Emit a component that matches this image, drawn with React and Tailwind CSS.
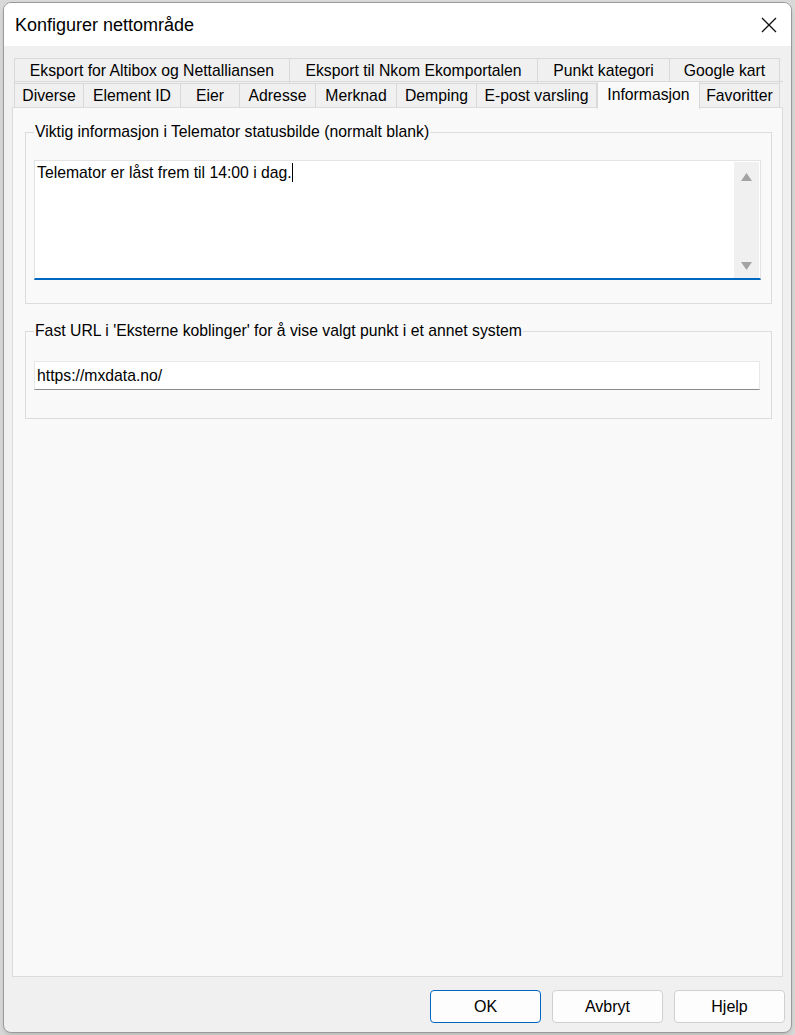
import React from "react";

const topTabs = [
  { label: "Eksport for Altibox og Nettalliansen", w: "w-[276px]" },
  { label: "Eksport til Nkom Ekomportalen", w: "w-[248px]" },
  { label: "Punkt kategori", w: "w-[132px]" },
  { label: "Google kart", w: "w-[110px]" },
];

const bottomTabs = [
  { label: "Diverse", w: "w-[70px]" },
  { label: "Element ID", w: "w-[97px]" },
  { label: "Eier", w: "w-[59px]" },
  { label: "Adresse", w: "w-[76px]" },
  { label: "Merknad", w: "w-[81px]" },
  { label: "Demping", w: "w-[80px]" },
  { label: "E-post varsling", w: "w-[120px]" },
  { label: "Informasjon", w: "w-[103px]", active: true },
  { label: "Favoritter", w: "w-[80px]" },
];

const Tab = ({ label, w, active }) =>
  active ? (
    <div
      className={`${w} h-[28px] -mb-px relative z-10 flex items-center justify-center border border-b-0 border-[#d9d9d9] bg-[#f9f9f9] pb-[2px]`}
    >
      {label}
    </div>
  ) : (
    <div
      className={`${w} h-[25px] flex items-center justify-center border border-b-0 border-l-0 first:border-l border-[#d9d9d9] bg-[#f0f0f0]`}
    >
      {label}
    </div>
  );

const GroupBox = ({ title, children, className = "" }) => (
  <fieldset className={`border border-[#dcdcdc] pl-[8px] ${className}`}>
    <legend className="px-[1px] leading-[18px] text-black">{title}</legend>
    {children}
  </fieldset>
);

const Triangle = ({ down }) => (
  <svg width="11" height="8" viewBox="0 0 11 8">
    <path
      d={down ? "M0 0 H11 L5.5 8 Z" : "M0 8 H11 L5.5 0 Z"}
      fill="#a3a3a3"
    />
  </svg>
);

const Button = ({ children, primary }) => (
  <button
    type="button"
    className={`w-[111px] h-[33px] rounded-[4px] border bg-[#fdfdfd] text-[16px] text-black ${
      primary ? "border-[#0067c0]" : "border-[#d0d0d0]"
    }`}
  >
    {children}
  </button>
);

const App = () => {
  return (
    <div className="w-[795px] h-[1035px] bg-[#d9d9d9] pt-[2px] pl-[3px] font-['Liberation_Sans',Arial,sans-serif] text-black">
      <div className="w-[789px] h-[1031px] flex flex-col rounded-[8px] border border-[#9a9a9a] bg-[#f0f0f0] overflow-hidden shadow-md">
        {/* title bar */}
        <div className="h-[43px] shrink-0 bg-white flex items-center justify-between pl-[11px] pr-[14px]">
          <span className="text-[18px] leading-none">Konfigurer nettområde</span>
          <svg width="16" height="16" viewBox="0 0 16 16">
            <path d="M1 1 L15 15 M15 1 L1 15" stroke="#111" strokeWidth="1.3" />
          </svg>
        </div>

        <div className="flex-1 flex flex-col px-[8px] pt-[12px] text-[15.75px]">
          {/* tabs */}
          <div className="ml-[2px] flex flex-col">
            <div className="flex">
              {topTabs.map((t) => (
                <Tab key={t.label} {...t} />
              ))}
            </div>
            <div className="flex items-end border-t border-[#d9d9d9] -mt-[2px] h-[27px]">
              {bottomTabs.map((t) => (
                <Tab key={t.label} {...t} />
              ))}
            </div>
          </div>

          {/* panel */}
          <div className="flex-1 border border-[#dcdcdc] bg-[#f9f9f9] pt-[15px] pl-[12px] pr-[10px] -mt-px">
            <GroupBox
              title="Viktig informasjon i Telemator statusbilde (normalt blank)"
              className="pr-[10px] pt-[19px] pb-[23px]"
            >
              <div className="h-[120px] flex bg-white border border-[#e3e3e3] border-b-2 border-b-[#0067c0]">
                <div className="flex-1 pl-[2px] pt-[2px] leading-[20px]">
                  Telemator er låst frem til 14:00 i dag.
                  <span className="inline-block w-px h-[19px] bg-black align-[-4px]" />
                </div>
                <div className="w-[25px] mr-[1px] mt-[1px] bg-[#f0f0f0] flex flex-col items-center justify-between pt-[11px] pb-[8px]">
                  <Triangle />
                  <Triangle down />
                </div>
              </div>
            </GroupBox>

            <GroupBox
              title="Fast URL i 'Eksterne koblinger' for å vise valgt punkt i et annet system"
              className="mt-[18px] pr-[11px] pt-[21px] pb-[28px]"
            >
              <div className="h-[29px] flex items-center bg-white border border-[#e8e8e8] border-b-[#8a8a8a] pl-[2px]">
                https://mxdata.no/
              </div>
            </GroupBox>
          </div>

          {/* buttons */}
          <div className="shrink-0 flex justify-end gap-[11px] mt-[13px] mb-[9px] -mr-[2px]">
            <Button primary>OK</Button>
            <Button>Avbryt</Button>
            <Button>Hjelp</Button>
          </div>
        </div>
      </div>
    </div>
  );
};

export default App;
